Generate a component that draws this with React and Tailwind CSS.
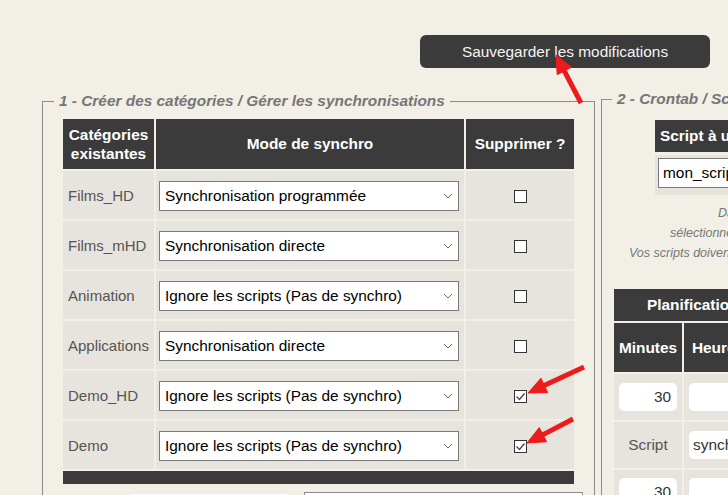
import React from 'react'

const rows = [
  { name: 'Films_HD', mode: 'Synchronisation programmée', del: false },
  { name: 'Films_mHD', mode: 'Synchronisation directe', del: false },
  { name: 'Animation', mode: 'Ignore les scripts (Pas de synchro)', del: false },
  { name: 'Applications', mode: 'Synchronisation directe', del: false },
  { name: 'Demo_HD', mode: 'Ignore les scripts (Pas de synchro)', del: true },
  { name: 'Demo', mode: 'Ignore les scripts (Pas de synchro)', del: true },
]

// arrows drawn on top of the screenshot: tail -> tip
const arrows = [
  { from: [581, 103], to: [556, 55] },
  { from: [584, 367], to: [528, 393] },
  { from: [573, 419], to: [527, 443] },
]

function Arrow({ from, to }) {
  const dx = to[0] - from[0], dy = to[1] - from[1]
  const len = Math.hypot(dx, dy)
  const ux = dx / len, uy = dy / len
  const bx = to[0] - ux * 18, by = to[1] - uy * 18
  const nx = -uy * 8, ny = ux * 8
  return (
    <g fill="#ec1c1c" stroke="#ec1c1c">
      <line x1={from[0]} y1={from[1]} x2={bx + ux * 2} y2={by + uy * 2} strokeWidth="5" />
      <polygon points={`${to[0]},${to[1]} ${bx + nx},${by + ny} ${bx - nx},${by - ny}`} strokeWidth="1" />
    </g>
  )
}

function Select({ value }) {
  return (
    <div className="flex h-[30px] w-[300px] items-center justify-between border border-[#7a7a7a] bg-white pl-[5px] pr-[4px] text-[15.4px] text-black">
      <span>{value}</span>
      <svg width="10" height="6" viewBox="0 0 10 6" className="mr-[1px]"><path d="M1 1l4 4 4-4" fill="none" stroke="#6b6b6b" strokeWidth="1" /></svg>
    </div>
  )
}

function CheckBox({ checked }) {
  return (
    <span className="flex h-[13px] w-[13px] items-center justify-center border border-[#333] bg-white">
      {checked && <svg width="11" height="11" viewBox="0 0 11 11"><path d="M1.5 5.5l3 3 5-6" fill="none" stroke="#444" strokeWidth="1.3" /></svg>}
    </span>
  )
}

export default function App() {
  return (
    <div className="relative h-[495px] w-[728px] overflow-hidden bg-[#f2efe7] font-['Liberation_Sans',Arial,sans-serif]">
      <div className="pl-[420px] pt-[35px]">
        <button className="h-[33px] w-[290px] rounded-[6px] bg-[#3b3b3b] text-[15.4px] text-[#f4f4f4]">Sauvegarder les modifications</button>
      </div>

      <div className="mt-[24px] flex items-start">
        <fieldset className="ml-[42px] w-[553px] shrink-0 border border-[#8c8c8c] pl-[20px] pb-[20px]">
          <legend className="-ml-[9px] px-[5px] text-[15.4px] leading-[18px] font-bold italic text-[#767676]">1 - Créer des catégories / Gérer les synchronisations</legend>
          <div className="mt-[9px] grid grid-cols-[91px_308px_108px] gap-[2px]">
            <div className="flex h-[50px] flex-col items-center justify-center bg-[#3b3b3b] text-[15.4px] leading-[19px] font-bold text-white"><span>Catégories</span><span>existantes</span></div>
            <div className="flex items-center justify-center bg-[#3b3b3b] text-[15.4px] font-bold text-white">Mode de synchro</div>
            <div className="flex items-center justify-center bg-[#3b3b3b] text-[15.4px] font-bold text-white">Supprimer ?</div>
            {rows.map((r) => (
              <React.Fragment key={r.name}>
                <div className="flex h-[48px] items-center bg-[#e6e4dd] pl-[5px] pt-[2px] text-[15px] text-[#555]">{r.name}</div>
                <div className="flex items-center bg-[#e6e4dd] pl-[3px] pt-[2px]"><Select value={r.mode} /></div>
                <div className="flex items-center justify-center bg-[#e6e4dd] pl-[1px] pt-[2px]"><CheckBox checked={r.del} /></div>
              </React.Fragment>
            ))}
            <div className="col-span-3 h-[13px] bg-[#3b3b3b]" />
          </div>
          <div className="mt-[8px] flex">
            <div className="ml-[66px] h-[30px] w-[161px] rounded-[3px] border border-[#e9e7e1] bg-[#f7f6f2]" />
            <div className="ml-[14px] h-[30px] w-[279px] border border-[#8a8a8a] bg-white" />
          </div>
        </fieldset>

        <fieldset className="-mt-[2px] ml-[6px] w-[400px] shrink-0 border border-[#8c8c8c] pl-[12px]">
          <legend className="-ml-[2px] px-[5px] text-[15.4px] leading-[18px] font-bold italic text-[#767676]">2 - Crontab / Scripts</legend>
          <div className="ml-[41px] mt-[12px] w-[300px]">
            <div className="flex h-[32px] items-center bg-[#3b3b3b] pl-[5px] text-[15.4px] font-bold text-white">Script à utiliser</div>
            <div className="mt-[3px] h-[40px] bg-[#e6e4dd] pl-[3px] pt-[3px]">
              <div className="flex h-[30px] w-[280px] items-center border border-[#7a7a7a] bg-white pl-[4px] text-[15.4px] text-black">mon_script.sh</div>
            </div>
          </div>
          <div className="mt-[8px] text-[12.5px] leading-[20px] italic text-[#777]">
            <div className="pl-[104px]">Dans la liste</div>
            <div className="pl-[56px]">sélectionnez le script</div>
            <div className="pl-[15px]">Vos scripts doivent être placés</div>
          </div>
          <div className="mt-[26px] grid grid-cols-[68px_68px_68px_68px] gap-[2px]">
            <div className="col-span-4 flex h-[32px] items-center bg-[#3b3b3b] pl-[33px] text-[15.4px] font-bold text-white">Planification des tâches</div>
            <div className="flex h-[49px] items-center justify-center bg-[#3b3b3b] text-[15.4px] font-bold text-white">Minutes</div>
            <div className="flex items-center justify-center bg-[#3b3b3b] text-[15.4px] font-bold text-white">Heures</div>
            <div className="flex items-center justify-center bg-[#3b3b3b] text-[15.4px] font-bold text-white">Jours</div>
            <div className="flex items-center justify-center bg-[#3b3b3b] text-[15.4px] font-bold text-white">Mois</div>

            <div className="flex h-[46px] items-center bg-[#e6e4dd] pl-[5px]"><div className="flex h-[28px] w-[58px] items-center justify-end rounded-[5px] bg-white pr-[6px] text-[15.4px] text-[#333]">30</div></div>
            <div className="flex items-center bg-[#e6e4dd] pl-[5px]"><div className="h-[28px] w-[58px] rounded-[5px] bg-white" /></div>
            <div className="flex items-center bg-[#e6e4dd] pl-[5px]"><div className="h-[28px] w-[58px] rounded-[5px] bg-white" /></div>
            <div className="flex items-center bg-[#e6e4dd] pl-[5px]"><div className="h-[28px] w-[58px] rounded-[5px] bg-white" /></div>

            <div className="flex h-[46px] items-center justify-center bg-[#e6e4dd] text-[15.4px] text-[#555]">Script</div>
            <div className="col-span-3 flex items-center bg-[#e6e4dd] pl-[5px]"><div className="flex h-[28px] w-[190px] items-center rounded-[5px] bg-white pl-[4px] text-[15.4px] text-[#333]">synchro.sh</div></div>

            <div className="flex h-[46px] items-start bg-[#e6e4dd] pl-[5px] pt-[8px]"><div className="flex h-[28px] w-[58px] items-center justify-end rounded-[5px] bg-white pr-[6px] text-[15.4px] text-[#333]">30</div></div>
            <div className="flex items-start bg-[#e6e4dd] pl-[5px] pt-[8px]"><div className="h-[28px] w-[58px] rounded-[5px] bg-white" /></div>
            <div className="bg-[#e6e4dd]" />
            <div className="bg-[#e6e4dd]" />
          </div>
        </fieldset>
      </div>

      <svg className="pointer-events-none absolute left-0 top-0" width="728" height="495">
        {arrows.map((a, i) => <Arrow key={i} {...a} />)}
      </svg>
    </div>
  )
}
